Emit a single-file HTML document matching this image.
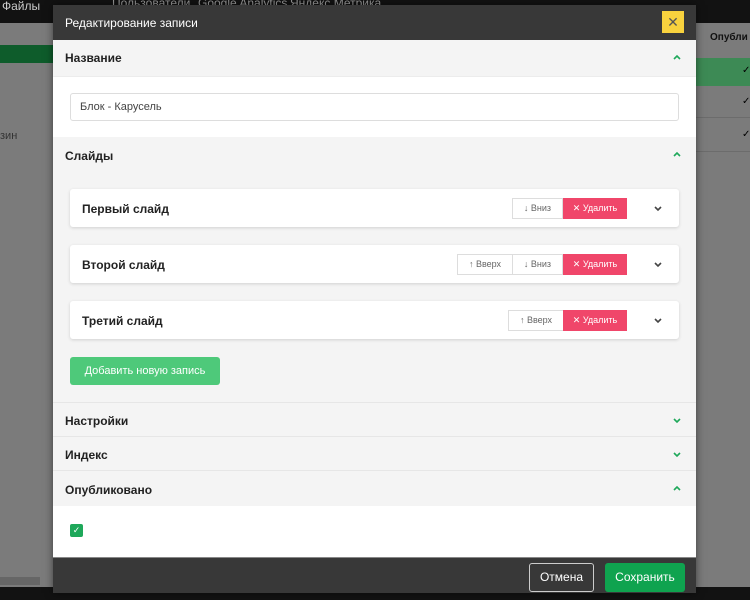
<!DOCTYPE html>
<html><head><meta charset="utf-8"><style>
*{box-sizing:border-box;margin:0;padding:0}
body{width:750px;height:600px;overflow:hidden;background:#7b7b7b;font-family:"Liberation Sans",sans-serif;position:relative}
.nav{position:absolute;left:0;top:0;width:750px;height:23px;background:#121212;color:#999;font-size:12px}
.nav span{position:absolute;top:-4px;white-space:nowrap}
.abs{position:absolute}
.modal{position:absolute;left:53px;top:5px;width:643px;height:588px;background:#f4f4f4;box-shadow:0 0 8px rgba(0,0,0,.5)}
.mh{height:35px;background:#383838;color:#fff;font-size:12px;padding:11px 12px;position:relative}
.x{position:absolute;right:12px;top:6px;width:22px;height:22px;background:#f8d23e;color:#555;font-size:14px;text-align:center;line-height:22px}
.sec{position:absolute;left:0;width:643px;font-weight:bold;font-size:12px;color:#222;padding-left:12px}
.chev{position:absolute;right:14px;width:10px;height:10px}
.card{position:absolute;left:17px;width:609px;height:38px;background:#fff;border-radius:3px;box-shadow:0 1px 3px rgba(0,0,0,.15);font-size:12px;font-weight:bold;color:#222}
.card .t{position:absolute;left:12px;top:13px}
.b{position:absolute;top:9px;height:21px;border:1px solid #ddd;font-size:9px;font-weight:normal;color:#666;text-align:center;line-height:19px;background:#fff}
.del{background:#f0466a;border-color:#f0466a;color:#fff}
</style></head><body>
<div class="nav"><span style="left:2px;top:-1px;color:#ccc">Файлы</span><span style="left:112px">Пользователи</span><span style="left:198px">Google Analytics</span><span style="left:290px">Яндекс.Метрика</span></div>
<div class="abs" style="left:0;top:45px;width:60px;height:18px;background:#0e5c2b"></div>
<div class="abs" style="left:0;top:130px;color:#333;font-size:11px">зин</div>
<div class="abs" style="left:696px;top:58px;width:54px;height:28px;background:#3d8a55"></div>
<div class="abs" style="left:710px;top:32px;font-size:10px;font-weight:bold;color:#111">Опубли</div>
<div class="abs" style="left:696px;top:117px;width:54px;height:1px;background:#6c6c6c"></div>
<div class="abs" style="left:696px;top:151px;width:54px;height:1px;background:#6c6c6c"></div>
<div class="abs" style="left:742px;top:65px;font-size:10px">✓</div>
<div class="abs" style="left:742px;top:96px;font-size:10px">✓</div>
<div class="abs" style="left:742px;top:129px;font-size:10px">✓</div>
<div class="abs" style="left:0;top:577px;width:40px;height:8px;background:#666"></div>
<div class="abs" style="left:0;top:587px;width:750px;height:13px;background:#121212"></div>
<div class="modal">
<div class="mh">Редактирование записи<div class="x">✕</div></div>
<div class="sec" style="top:35px;height:36px;line-height:36px;box-shadow:0 1px 2px rgba(0,0,0,.05)">Название<svg class="chev" style="top:12px" viewBox="0 0 10 10"><path d="M2 7L5 4L8 7" stroke="#1ea85a" stroke-width="1.6" fill="none"/></svg></div>
<div class="abs" style="left:0;top:72px;width:643px;height:60px;background:#fff"></div>
<div class="abs" style="left:17px;top:88px;width:609px;height:28px;border:1px solid #ddd;border-radius:3px;background:#fff;font-size:11px;color:#444;padding:7px 9px">Блок - Карусель</div>
<div class="sec" style="top:132px;height:36px;line-height:38px">Слайды<svg class="chev" style="top:12px" viewBox="0 0 10 10"><path d="M2 7L5 4L8 7" stroke="#1ea85a" stroke-width="1.6" fill="none"/></svg></div>
<div class="card" style="top:184px"><span class="t">Первый слайд</span><div class="b" style="left:442px;width:51px">↓ Вниз</div><div class="b del" style="left:493px;width:64px">✕ Удалить</div><svg class="chev" style="top:15px;right:16px" viewBox="0 0 10 10"><path d="M2 3L5 6L8 3" stroke="#444" stroke-width="1.6" fill="none"/></svg></div>
<div class="card" style="top:240px"><span class="t">Второй слайд</span><div class="b" style="left:387px;width:56px">↑ Вверх</div><div class="b" style="left:442px;width:51px">↓ Вниз</div><div class="b del" style="left:493px;width:64px">✕ Удалить</div><svg class="chev" style="top:15px;right:16px" viewBox="0 0 10 10"><path d="M2 3L5 6L8 3" stroke="#444" stroke-width="1.6" fill="none"/></svg></div>
<div class="card" style="top:296px"><span class="t">Третий слайд</span><div class="b" style="left:438px;width:56px">↑ Вверх</div><div class="b del" style="left:493px;width:64px">✕ Удалить</div><svg class="chev" style="top:15px;right:16px" viewBox="0 0 10 10"><path d="M2 3L5 6L8 3" stroke="#444" stroke-width="1.6" fill="none"/></svg></div>
<div class="abs" style="left:17px;top:352px;width:150px;height:28px;background:#4ec97a;border-radius:3px;color:#fff;font-size:11px;text-align:center;line-height:28px">Добавить новую запись</div>
<div class="sec" style="top:397px;height:34px;line-height:36px;border-top:1px solid #e6e6e6">Настройки<svg class="chev" style="top:13px" viewBox="0 0 10 10"><path d="M2 3L5 6L8 3" stroke="#1ea85a" stroke-width="1.6" fill="none"/></svg></div>
<div class="sec" style="top:431px;height:34px;line-height:36px;border-top:1px solid #e6e6e6">Индекс<svg class="chev" style="top:13px" viewBox="0 0 10 10"><path d="M2 3L5 6L8 3" stroke="#1ea85a" stroke-width="1.6" fill="none"/></svg></div>
<div class="sec" style="top:465px;height:36px;line-height:38px;border-top:1px solid #e6e6e6">Опубликовано<svg class="chev" style="top:12px" viewBox="0 0 10 10"><path d="M2 7L5 4L8 7" stroke="#1ea85a" stroke-width="1.6" fill="none"/></svg></div>
<div class="abs" style="left:0;top:501px;width:643px;height:51px;background:#fff"></div>
<div class="abs" style="left:17px;top:519px;width:13px;height:13px;background:#1ea85a;border-radius:2px;color:#fff;font-size:9px;text-align:center;line-height:13px">✓</div>
<div class="abs" style="left:0;top:552px;width:643px;height:36px;background:#383838;border-top:1px solid #888"></div>
<div class="abs" style="left:476px;top:558px;width:65px;height:29px;border:1px solid #ccc;border-radius:3px;color:#fff;font-size:12px;text-align:center;line-height:27px">Отмена</div>
<div class="abs" style="left:552px;top:558px;width:80px;height:29px;background:#0fa34f;border-radius:3px;color:#fff;font-size:12px;text-align:center;line-height:29px">Сохранить</div>
</div>
</body></html>
